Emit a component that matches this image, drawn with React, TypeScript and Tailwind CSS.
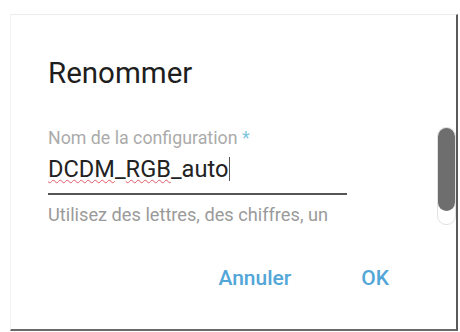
import React from "react";

export default function App() {
    return (
        <div className="w-[460px] h-[332px] bg-white overflow-hidden pt-[14px] pl-[10px]" style={{ fontFamily: "Roboto, 'Noto Sans', sans-serif" }}>
            <div className="relative w-[448px] h-[317px] bg-white border-t border-l border-t-[#ececec] border-l-[#f3f3f3] border-r-2 border-r-[#5a5a5a] border-b-2 border-b-[#6a6a6a] flex flex-col pt-[41px] pl-[37px]">
                <h2 className="text-[29.5px] leading-[34px] font-normal text-[#1e1e1e]">Renommer</h2>

                {/* Text field */}
                <div className="mt-[38px] w-[299px] flex flex-col">
                    <label className="text-[17.8px] leading-[20px] text-[#ababab]">
                        Nom de la configuration <span className="text-[#7cc6e0]">*</span>
                    </label>
                    <div className="mt-[7px] pb-[10px] border-b-2 border-b-[#555] text-[23.6px] leading-[28px] text-[#222] flex items-center">
                        <span className="underline decoration-wavy decoration-[#e05a6a] decoration-1 underline-offset-[2px]">DCDM</span>
                        <span>_</span>
                        <span className="underline decoration-wavy decoration-[#e05a6a] decoration-1 underline-offset-[2px]">RGB</span>
                        <span>_auto</span>
                        <span className="w-px h-[24px] bg-[#555] ml-[1px]" />
                    </div>
                    <p className="mt-[10px] text-[18.2px] leading-[20px] text-[#9a9a9a] whitespace-nowrap">
                        Utilisez des lettres, des chiffres, un
                    </p>
                </div>

                {/* Actions */}
                <div className="mt-[41px] flex justify-end gap-[70px] pr-[67px]">
                    <button className="text-[21px] leading-[24px] font-medium text-[#52a6d8]">Annuler</button>
                    <button className="text-[21px] leading-[24px] font-medium text-[#52a6d8]">OK</button>
                </div>

                {/* Scrollbar */}
                <div className="absolute right-0 top-[112px] w-[19px] h-[98px] rounded-[9px] border border-[#e2e2e2] bg-white">
                    <div className="w-full h-[83px] rounded-[9px] bg-[#6e6e6e]" />
                </div>
            </div>
        </div>
    );
}
